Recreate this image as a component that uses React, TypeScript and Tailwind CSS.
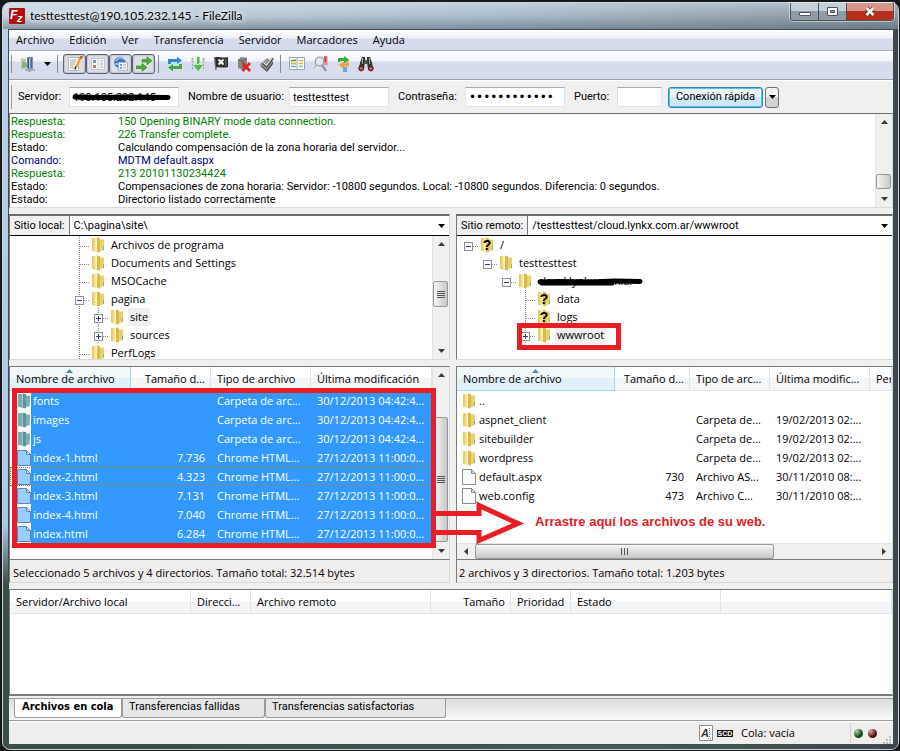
import { ReactNode } from 'react'

type IconKind = 'folder' | 'unknown' | 'file'
type Guide = 'none' | 'line' | 'tee' | 'plus' | 'minus' | 'root'

interface LogLine {
  kind: 'Respuesta:' | 'Estado:' | 'Comando:'
  text: string
}

interface TreeNode {
  label: string
  guides: Guide[]
  icon: IconKind
  selected?: boolean
  hidden?: boolean
}

interface FileRow {
  name: string
  icon: IconKind
  size: string
  type: string
  modified: string
  focused?: boolean
}

const menus = ['Archivo', 'Edición', 'Ver', 'Transferencia', 'Servidor', 'Marcadores', 'Ayuda']

const logLines: LogLine[] = [
  { kind: 'Respuesta:', text: '150 Opening BINARY mode data connection.' },
  { kind: 'Respuesta:', text: '226 Transfer complete.' },
  { kind: 'Estado:', text: 'Calculando compensación de la zona horaria del servidor...' },
  { kind: 'Comando:', text: 'MDTM default.aspx' },
  { kind: 'Respuesta:', text: '213 20101130234424' },
  { kind: 'Estado:', text: 'Compensaciones de zona horaria: Servidor: -10800 segundos. Local: -10800 segundos. Diferencia: 0 segundos.' },
  { kind: 'Estado:', text: 'Directorio listado correctamente' },
]

const logColors = {
  'Respuesta:': 'text-[#008000]',
  'Estado:': 'text-black',
  'Comando:': 'text-[#000080]',
}

const localTree: TreeNode[] = [
  { label: 'Archivos de programa', guides: ['tee'], icon: 'folder' },
  { label: 'Documents and Settings', guides: ['tee'], icon: 'folder' },
  { label: 'MSOCache', guides: ['tee'], icon: 'folder' },
  { label: 'pagina', guides: ['minus'], icon: 'folder' },
  { label: 'site', guides: ['line', 'plus'], icon: 'folder', selected: true },
  { label: 'sources', guides: ['line', 'plus'], icon: 'folder' },
  { label: 'PerfLogs', guides: ['tee'], icon: 'folder' },
]

const remoteTree: TreeNode[] = [
  { label: '/', guides: ['root'], icon: 'unknown' },
  { label: 'testtesttest', guides: ['none', 'root'], icon: 'folder' },
  { label: 'cloud.lynkx.com.ar', guides: ['none', 'none', 'root'], icon: 'folder', hidden: true },
  { label: 'data', guides: ['none', 'none', 'none', 'tee'], icon: 'unknown' },
  { label: 'logs', guides: ['none', 'none', 'none', 'tee'], icon: 'unknown' },
  { label: 'wwwroot', guides: ['none', 'none', 'none', 'plus'], icon: 'folder', selected: true },
]

const localFiles: FileRow[] = [
  { name: 'fonts', icon: 'folder', size: '', type: 'Carpeta de arc...', modified: '30/12/2013 04:42:4...' },
  { name: 'images', icon: 'folder', size: '', type: 'Carpeta de arc...', modified: '30/12/2013 04:42:4...' },
  { name: 'js', icon: 'folder', size: '', type: 'Carpeta de arc...', modified: '30/12/2013 04:42:4...' },
  { name: 'index-1.html', icon: 'file', size: '7.736', type: 'Chrome HTML...', modified: '27/12/2013 11:00:0...' },
  { name: 'index-2.html', icon: 'file', size: '4.323', type: 'Chrome HTML...', modified: '27/12/2013 11:00:0...', focused: true },
  { name: 'index-3.html', icon: 'file', size: '7.131', type: 'Chrome HTML...', modified: '27/12/2013 11:00:0...' },
  { name: 'index-4.html', icon: 'file', size: '7.040', type: 'Chrome HTML...', modified: '27/12/2013 11:00:0...' },
  { name: 'index.html', icon: 'file', size: '6.284', type: 'Chrome HTML...', modified: '27/12/2013 11:00:0...' },
]

const remoteFiles: FileRow[] = [
  { name: '..', icon: 'folder', size: '', type: '', modified: '' },
  { name: 'aspnet_client', icon: 'folder', size: '', type: 'Carpeta de...', modified: '19/02/2013 02:...' },
  { name: 'sitebuilder', icon: 'folder', size: '', type: 'Carpeta de...', modified: '19/02/2013 02:...' },
  { name: 'wordpress', icon: 'folder', size: '', type: 'Carpeta de...', modified: '19/02/2013 02:...' },
  { name: 'default.aspx', icon: 'file', size: '730', type: 'Archivo AS...', modified: '30/11/2010 08:...' },
  { name: 'web.config', icon: 'file', size: '473', type: 'Archivo C...', modified: '30/11/2010 08:...' },
]

function ItemIcon({ kind, selected = false }: { kind: IconKind; selected?: boolean }) {
  if (kind === 'file') {
    return (
      <svg className="h-4 w-3.5 shrink-0" viewBox="0 0 14 16" aria-hidden="true">
        <path d="M.5.5h9l4 4v11H.5z" fill={selected ? '#99ccff' : '#fbfbfb'} stroke={selected ? '#5c86b4' : '#8b8b8b'} />
        <path d="M9.5.5v4h4z" fill={selected ? '#c4e0fb' : '#e4e4e4'} stroke={selected ? '#5c86b4' : '#8b8b8b'} />
      </svg>
    )
  }
  return (
    <svg className="h-4 w-3.5 shrink-0" viewBox="0 0 14 16" aria-hidden="true">
      <path d="M1 1h5.500v14L1 13.800z" fill={selected ? '#6fa5aa' : '#f0de88'} />
      <path d="M1 1h2v13.200l-2-.4z" fill={selected ? '#7fb0b3' : '#e6cf6a'} />
      <path d="M8 2.500h5v10.500l-5 1.500z" fill={selected ? '#7eaeb2' : '#ead06a'} />
      <path d="M6 .5l3 .8V15.500l-3-.5z" fill={selected ? '#5c959f' : '#d9bb4c'} />
      <path d="M4.500 1l1.500-.5V15l-1.500-.4z" fill={selected ? '#9cc6c6' : '#fbf3bd'} />
      <path d="M12.500 9v4" stroke={selected ? '#9cd0ea' : '#7fb4a8'} />
      {kind === 'unknown' && (
        <text x="7" y="13" textAnchor="middle" fontFamily="Liberation Sans" fontWeight="bold" fontSize="14" fill="#000">
          ?
        </text>
      )}
    </svg>
  )
}

// One 19px wide slot in front of a tree entry
function GuideCell({ kind }: { kind: Guide }) {
  const box = kind === 'plus' || kind === 'minus' || kind === 'root'
  return (
    <svg className="h-[18px] w-[19px] shrink-0" viewBox="0 0 19 18" fill="none" shapeRendering="crispEdges" aria-hidden="true">
      {kind !== 'none' && kind !== 'root' && <path d="M9.500 0v18" stroke="#8a8a8a" strokeDasharray="1 1" />}
      {kind !== 'none' && kind !== 'line' && <path d="M10 10.500h9" stroke="#8a8a8a" strokeDasharray="1 1" />}
      {box && (
        <>
          <rect x="5.500" y="6.500" width="8" height="8" fill="#fff" stroke="#919191" />
          <path d="M7 10.500h5" stroke="#2c3c8c" />
          {kind === 'plus' && <path d="M9.500 8v5" stroke="#2c3c8c" />}
        </>
      )}
    </svg>
  )
}

function Tree({ nodes, label }: { nodes: TreeNode[]; label: string }) {
  return (
    <ul aria-label={label}>
      {nodes.map((node) => (
        <li key={node.label} className="flex h-[18px] items-center">
          {node.guides.map((g, i) => (
            <GuideCell key={i} kind={g} />
          ))}
          <span className="ml-0.5 flex">
            <ItemIcon kind={node.icon} />
          </span>
          <span className={`relative ml-1 px-0.5 leading-[18px] ${node.selected ? 'bg-[#efefef]' : ''}`}>
            {node.label}
            {node.hidden && (
              <svg className="absolute left-0 top-1.5 h-2 w-[108px]" viewBox="0 0 108 8" aria-hidden="true">
                <path d="M4 4l20-.5 30 .5 25-1 25 .5M6 5h70" stroke="#000" strokeWidth="5" strokeLinecap="round" fill="none" />
              </svg>
            )}
          </span>
        </li>
      ))}
    </ul>
  )
}

function Triangle({ dir }: { dir: 'up' | 'down' | 'left' | 'right' }) {
  const d = {
    up: 'M0 5l3.500-4 3.500 4z',
    down: 'M0 2l3.500 4 3.500-4z',
    left: 'M5 0v7l-4-3.500z',
    right: 'M2 0v7l4-3.500z',
  }[dir]
  return (
    <svg className="h-[7px] w-[7px]" viewBox="0 0 7 7" aria-hidden="true">
      <path d={d} fill="#3c3c3c" />
    </svg>
  )
}

function ScrollBar({ track, thumb, grip = true }: { track: string; thumb: string; grip?: boolean }) {
  return (
    <div className="flex w-[17px] shrink-0 flex-col border-l border-[#e3e3e3] bg-[#f0f0f0]">
      <button type="button" aria-label="Subir" className="flex h-[17px] items-center justify-center">
        <Triangle dir="up" />
      </button>
      <div className={`flex-1 ${track}`}>
        <div className={`mr-px flex flex-col items-center justify-center gap-px rounded-xs border border-[#979797] bg-linear-to-r from-[#f5f5f5] to-[#c8c8c8] ${thumb}`}>
          {grip && [0, 1, 2, 3].map((i) => <span key={i} className="h-px w-2 border-b border-[#555]" />)}
        </div>
      </div>
      <button type="button" aria-label="Bajar" className="flex h-[17px] items-center justify-center">
        <Triangle dir="down" />
      </button>
    </div>
  )
}

function SiteCombo({ id, label, value }: { id: string; label: string; value: string }) {
  return (
    <div className="flex h-5 border-b border-black bg-white font-[Roboto,'Liberation_Sans',sans-serif] text-[11px]">
      <label htmlFor={id} className="flex shrink-0 items-center border-r border-[#777] bg-[#f0f0f0] pl-1 pr-1 pt-px">
        {label}
      </label>
      <div className="relative flex flex-1 items-center">
        <select id={id} className="h-full w-full appearance-none bg-white pl-1 pt-px outline-none">
          <option>{value}</option>
        </select>
        <svg className="pointer-events-none absolute right-1 h-1 w-[7px]" viewBox="0 0 7 4" aria-hidden="true">
          <path d="M0 0h7l-3.500 4z" />
        </svg>
      </div>
    </div>
  )
}

function HeadCell({ children, sorted = false, right = false }: { children?: ReactNode; sorted?: boolean; right?: boolean }) {
  return (
    <th
      scope="col"
      className={`relative h-6 overflow-hidden whitespace-nowrap border-b border-r pb-0 pl-1.5 pr-[5px] pt-0.5 font-normal ${right ? 'text-right' : 'text-left'} ${
        sorted
          ? 'border-[#96d9f9] bg-linear-to-b from-[#f2f9fc] from-50% to-[#e1f1f9] to-50%'
          : 'border-[#e2e3e6] bg-linear-to-b from-white from-50% to-[#f4f5f7] to-50%'
      }`}
    >
      {children}
      {sorted && (
        <svg className="absolute left-1/2 top-0.5 -ml-1 h-1 w-[7px]" viewBox="0 0 7 4" aria-hidden="true">
          <path d="M0 4l3.500-4 3.500 4z" fill="#5a8ba5" />
        </svg>
      )}
    </th>
  )
}

function FileCells({ file, selected }: { file: FileRow; selected: boolean }) {
  const fill = selected ? 'bg-[#3399ff] text-white' : ''
  const cell = `h-[19px] overflow-hidden whitespace-nowrap px-1.5 pb-0 pt-px leading-[18px] ${fill}`
  return (
    <tr className={file.focused ? 'outline-1 -outline-offset-1 outline-dotted outline-[#a8804e]' : ''}>
      <td className={`h-[19px] p-0 ${selected ? 'pl-[7px]' : 'pl-[5px]'}`}>
        <div className="flex h-[19px] items-center">
          <ItemIcon kind={file.icon} selected={selected} />
          <span className={`flex-1 whitespace-nowrap leading-[19px] ${selected ? 'h-[19px] pl-0.5' : 'pl-[3px]'} ${fill}`}>
            {file.name}
          </span>
        </div>
      </td>
      <td className={`${cell} text-right`}>{file.size}</td>
      <td className={cell}>{file.type}</td>
      <td className={cell}>{file.modified}</td>
    </tr>
  )
}

function ToolIcon({ children }: { children: ReactNode }) {
  return (
    <svg className="h-4 w-4" viewBox="0 0 16 16" fill="none" aria-hidden="true">
      {children}
    </svg>
  )
}

function ToolButton({ label, pressed = false, children }: { label: string; pressed?: boolean; children: ReactNode }) {
  return (
    <button
      type="button"
      aria-label={label}
      aria-pressed={pressed}
      className={`flex h-5 w-[23px] items-center justify-center rounded-[3px] border ${
        pressed ? 'border-[#5d6470] bg-[#dcdfe8] shadow-[inset_0_0_2px_#8c929e]' : 'border-transparent'
      }`}
    >
      <ToolIcon>{children}</ToolIcon>
    </button>
  )
}

function Separator() {
  return <span className="h-[18px] w-px bg-[#868b99]" />
}

function Toolbar() {
  return (
    <div
      role="toolbar"
      aria-label="Herramientas"
      className="flex h-[29px] shrink-0 items-center border-b border-[#9b9ea8] bg-linear-to-b from-white from-0% via-[#f2f4fa] via-35% to-[#d6dcee] to-40% pb-0.5 pl-0.5"
    >
      <Separator />
      <div className="ml-1 flex">
        <ToolButton label="Gestor de sitios">
          <path d="M1 2l5 1v9l-5 2z" fill="#b8cfae" />
          <path d="M2 5l5 2v4l-5 1z" fill="#8cb07e" />
          <path d="M7 1h6v12H7z" fill="#7f93b4" />
          <path d="M8.500 2v10M11 2v10" stroke="#38598f" strokeWidth="1.500" />
          <path d="M9.800 2v10" stroke="#d4def0" />
          <path d="M5 14h10M8 15h3" stroke="#7a8699" />
        </ToolButton>
        <button type="button" aria-label="Abrir lista de sitios" className="flex w-4 items-center justify-center">
          <svg className="h-1 w-[7px]" viewBox="0 0 7 4" aria-hidden="true">
            <path d="M0 0h7l-3.500 4z" />
          </svg>
        </button>
      </div>
      <span className="w-0.5" />
      <Separator />
      <div className="ml-[5px] mr-[3px] flex">
        <ToolButton label="Mostrar registro" pressed>
          <path d="M1.500 1.500h10v13h-10z" fill="#fff" stroke="#b4b4b4" />
          <path d="M3 4h7M3 6h6M3 8h5M3 10h4M3 12h6" stroke="#a4a4a4" />
          <path d="M14 1L9 11" stroke="#eeaa22" strokeWidth="2.500" />
          <path d="M14.800 0L13.500 2.500" stroke="#c4523e" strokeWidth="2.500" />
          <path d="M9 10.500l-1 3" stroke="#333" strokeWidth="1.500" />
        </ToolButton>
        <ToolButton label="Mostrar árbol local" pressed>
          <path d="M1.500 2.500h13v11h-13z" fill="#fafafa" stroke="#c6c6c6" />
          <path d="M3 4h3v3H3z" fill="#7298cf" />
          <path d="M3 9h3v3H3z" fill="#cf7474" />
          <path d="M8 3v10" stroke="#c6c6c6" />
          <path d="M10 5h3M10 8h3M10 11h3" stroke="#9ba7b8" />
        </ToolButton>
        <ToolButton label="Mostrar árbol remoto" pressed>
          <circle cx="7" cy="6.500" r="5.800" fill="#3c76c2" />
          <path d="M3 5c2-4 6-4 9-1M2 8h4" stroke="#a9cdf2" strokeWidth="1.500" />
          <path d="M5.500 6.500h9v8h-9z" fill="#f4f6fa" stroke="#aeb6c4" />
          <path d="M7 8h2v2H7zM7 11h2v2H7z" fill="#7a9ccd" />
          <path d="M10 9h3M10 12h3" stroke="#a7aebb" />
        </ToolButton>
        <ToolButton label="Mostrar cola" pressed>
          <path d="M6 3.500h5V.800L16 4.800 11 8.800V6H6z" fill="#48b236" stroke="#267c1d" strokeWidth=".6" />
          <path d="M0 10h6V7.500L11 11.500 6 15.200V12.500H0z" fill="#48b236" stroke="#267c1d" strokeWidth=".6" />
        </ToolButton>
      </div>
      <Separator />
      <div className="ml-1 mr-0.5 flex">
        <ToolButton label="Actualizar">
          <path d="M1 8V3h9V.500L15 4.500 10 8V6H4v2z" fill="#2a8fd6" />
          <path d="M15 8v5H6v2.500L1 11.500 6 8v2h6V8z" fill="#3eab3c" />
        </ToolButton>
        <ToolButton label="Procesar cola">
          <path d="M1 2h3v8H1zM12 2h3v8h-3z" fill="#d5dbe2" />
          <path d="M2.500 2v12M13.500 2v12" stroke="#8fb58f" strokeDasharray="2 1" />
          <path d="M7 1h2.500v8H13l-4.800 6L3.500 9H7z" fill="#52b942" />
          <path d="M4 5l4 4 4-4" stroke="#d9f0d2" />
        </ToolButton>
        <ToolButton label="Cancelar operación">
          <path d="M1.500 1l1.500 13" stroke="#777" strokeWidth="1.500" />
          <path d="M2 1.500c4-1.500 7 1 13-.5v10c-4 1.500-8-.5-12 .5z" fill="#2d2d2d" />
          <path d="M5.500 3.500l5 5M10.500 3.500l-5 5" stroke="#fff" strokeWidth="2" />
          <path d="M13 3v7" stroke="#777" />
        </ToolButton>
        <ToolButton label="Desconectar">
          <path d="M2 4l3-3 6 1v8l-4 4-5-2z" fill="#858585" />
          <path d="M2 4l5 1v8M7 5l4-3" stroke="#5f5f5f" />
          <path d="M6.500 7l7.500 8M14 7l-7.500 8" stroke="#e02424" strokeWidth="2.600" />
        </ToolButton>
        <ToolButton label="Reconectar">
          <path d="M1 8l7-6 6 3.500L8 13z" fill="#9a9a9a" />
          <path d="M1 8l7 5v3l-6-5z" fill="#6c6c6c" />
          <path d="M8 13l6-7.500V8l-6 8z" fill="#505050" />
          <path d="M4 7l3.500 3L14 2" stroke="#3a3a3a" strokeWidth="2.400" />
          <path d="M4.200 6.300l3.300 3L13.500 1.500" stroke="#ececec" strokeWidth="1.200" />
        </ToolButton>
      </div>
      <Separator />
      <div className="ml-1 flex">
        <ToolButton label="Filtros">
          <path d="M.5 1.500h15v12H.5z" fill="#fff" stroke="#93a7bd" />
          <path d="M2 4.500h5" stroke="#4a8b4a" strokeWidth="1.500" />
          <path d="M2 7.500h5" stroke="#d8b932" strokeWidth="2" />
          <path d="M2 10.500h5" stroke="#6ba4d8" strokeWidth="1.500" />
          <path d="M8 2v11" stroke="#93a7bd" />
          <path d="M9.500 4.500h4.500M9.500 7.500h4.500" stroke="#d8b932" strokeWidth="1.500" />
          <path d="M9.500 10.500h4.500" stroke="#8fc08f" strokeWidth="1.500" />
        </ToolButton>
        <ToolButton label="Comparar directorios">
          <path d="M1 11h6v4H1z" fill="#dfe3e8" />
          <path d="M12 0h3.500v9H12z" fill="#e58080" />
          <path d="M13.500 1v5" stroke="#c43a3a" strokeWidth="1.500" />
          <circle cx="7.500" cy="5.500" r="4.300" fill="#dde6f1" stroke="#9a9fa8" strokeWidth="1.300" />
          <path d="M10 9l4 6" stroke="#868b94" strokeWidth="2" />
          <path d="M4.500 8.500L2 13" stroke="#a3a8b0" />
        </ToolButton>
        <ToolButton label="Navegación sincronizada">
          <path d="M0 10h6v5H0z" fill="#dfe3e8" />
          <path d="M3 6V2h6V0L14.500 4 9 7.500V5H5.500v1z" fill="#43ad39" />
          <path d="M14 5v5.500H9V13L3.500 9 9 5.500V8" fill="#e9a43a" />
          <path d="M8 11h4v5H8z" fill="#6fa4dc" />
        </ToolButton>
        <ToolButton label="Buscar archivos">
          <path d="M4 1h3v5l-1 7H.500L2 7zM9 1h3l2 6 1.500 6H10L9 6z" fill="#333" />
          <path d="M6.500 4h3v4h-3z" fill="#555" />
          <path d="M4.500 2v6M11.500 2v6" stroke="#aaa" />
          <circle cx="3.200" cy="12.500" r="2.400" fill="#e0492c" stroke="#222" />
          <circle cx="12.800" cy="12.500" r="2.400" fill="#e0492c" stroke="#222" />
        </ToolButton>
      </div>
    </div>
  )
}

const field = 'h-5 border border-[#e2e3ea] border-t-[#abadb3] bg-white px-[3px] outline-none'

function QuickConnect() {
  return (
    <form
      className="flex h-[33px] shrink-0 items-center border-t border-white bg-[#f0f0f0] pl-0.5 font-[Roboto,'Liberation_Sans',sans-serif] text-[11px]"
      onSubmit={(e) => e.preventDefault()}
    >
      <span className="h-6 w-px bg-[#9a9a9a]" />
      <label htmlFor="host" className="ml-1.5 w-[51px] pt-px">Servidor:</label>
      <div className="relative flex">
        <input id="host" className={`${field} w-[110px]`} defaultValue="190.105.232.145" />
        <svg className="pointer-events-none absolute left-0.5 top-1.5 h-2 w-[102px]" viewBox="0 0 102 8" aria-hidden="true">
          <path d="M4 4l25 .5 30-.5 38 .5M8 4.500h70" stroke="#000" strokeWidth="5" strokeLinecap="round" fill="none" />
        </svg>
      </div>
      <label htmlFor="user" className="ml-[9px] w-[101px] pt-px">Nombre de usuario:</label>
      <input id="user" className={`${field} w-[100px]`} defaultValue="testtesttest" />
      <label htmlFor="pass" className="ml-[9px] w-[67px] pt-px">Contraseña:</label>
      <input id="pass" type="password" className={`${field} w-[100px] font-['DejaVu_Sans',sans-serif] text-xs`} defaultValue="abcdefghijkl" />
      <label htmlFor="port" className="ml-[9px] w-[43px] pt-px">Puerto:</label>
      <input id="port" className={`${field} w-[45px]`} />
      <button
        type="submit"
        className="ml-1.5 h-[21px] w-[95px] rounded-[3px] border border-[#3c7fb1] bg-linear-to-b from-[#f0f7fb] from-50% to-[#cfe6f4] to-50% pt-px shadow-[inset_0_0_0_1px_#48c8f0]"
      >
        Conexión rápida
      </button>
      <button
        type="button"
        aria-label="Historial"
        className="ml-0.5 flex h-[21px] w-3.5 items-center justify-center rounded-[3px] border border-[#707070] bg-linear-to-b from-[#f2f2f2] from-50% to-[#d4d4d4] to-50%"
      >
        <svg className="h-1 w-[7px]" viewBox="0 0 7 4" aria-hidden="true">
          <path d="M0 0h7l-3.500 4z" />
        </svg>
      </button>
    </form>
  )
}

function TitleBar() {
  return (
    <header className="-ml-[5px] -mr-1 h-[26px] shrink-0 rounded-t-[7px] bg-linear-to-r from-[#c6d4df] from-0% via-[#a9bccd] via-55% to-[#8a959e]">
      <div className="flex h-full items-start rounded-t-[7px] bg-linear-to-b from-[#e4edf4]/40 from-0% via-transparent via-50% to-[#4d6272]/50 pl-1.5 pr-1">
        <svg className="mt-[5px] h-4 w-4" viewBox="0 0 16 16" aria-hidden="true">
          <rect width="16" height="16" rx="1" fill="#b30f0f" />
          <text x="1" y="11" fontFamily="Liberation Sans" fontWeight="bold" fontStyle="italic" fontSize="12" fill="#fff">F</text>
          <text x="8" y="14" fontFamily="Liberation Sans" fontWeight="bold" fontStyle="italic" fontSize="11" fill="#fff">z</text>
        </svg>
        <h1 className="ml-[5px] mt-[3px] flex-1 font-[Lato,sans-serif] text-xs leading-5 [text-shadow:0_0_6px_#fff,0_0_6px_#fff]">
          testtesttest@190.105.232.145 - FileZilla
        </h1>
        <div className="flex h-[18px] overflow-hidden rounded-b-[4px] border border-t-0 border-[#48525c] shadow-[0_0_0_1px_#ffffff80]">
          <button type="button" aria-label="Minimizar" className="flex w-7 items-center justify-center border-r border-[#48525c] bg-linear-to-b from-[#c5cfd8] from-45% to-[#8f9ca8] to-50% pt-1">
            <span className="h-1 w-3 rounded-[1px] border border-[#4b535c] bg-white" />
          </button>
          <button type="button" aria-label="Maximizar" className="flex w-7 items-center justify-center border-r border-[#48525c] bg-linear-to-b from-[#c5cfd8] from-45% to-[#8f9ca8] to-50%">
            <svg className="h-[9px] w-[11px]" viewBox="0 0 11 9" aria-hidden="true">
              <path d="M.5.500h10v8H.5zM3.500 3.500v2h4v-2z" fill="#fff" fillRule="evenodd" stroke="#4b535c" />
            </svg>
          </button>
          <button type="button" aria-label="Cerrar" className="flex w-[46px] items-center justify-center bg-linear-to-b from-[#d8968a] from-45% to-[#b5301b] to-50%">
            <svg className="h-[11px] w-3" viewBox="0 0 12 11" aria-hidden="true">
              <path d="M2.500 2l7 7M9.500 2l-7 7" stroke="#5a3a3a" strokeWidth="4" />
              <path d="M2.500 2l7 7M9.500 2l-7 7" stroke="#fff" strokeWidth="2.500" />
            </svg>
          </button>
        </div>
      </div>
    </header>
  )
}

function LocalPane() {
  return (
    <section className="flex min-w-0 flex-col gap-1.5">
      <div className="flex h-[146px] flex-col border border-t-2 border-[#d9d9d9] border-l-[#777] border-t-[#6b6b6b] bg-white">
        <SiteCombo id="local-site" label="Sitio local:" value="C:\pagina\site\" />
        <div className="flex min-h-0 flex-1">
          <div className="flex-1 overflow-hidden pl-[60px]">
            <Tree nodes={localTree} label="Árbol local" />
          </div>
          <ScrollBar track="pt-7" thumb="h-[26px]" />
        </div>
      </div>
      <div className="relative">
        <div className="flex h-[194px] border border-[#7a7a7a] border-r-[#d9d9d9] bg-white">
          <div className="min-w-0 flex-1 overflow-hidden">
            <table className="w-full table-fixed border-separate border-spacing-0">
              <colgroup>
                <col className="w-[121px]" />
                <col className="w-20" />
                <col className="w-[100px]" />
                <col />
              </colgroup>
              <thead>
                <tr>
                  <HeadCell sorted>Nombre de archivo</HeadCell>
                  <HeadCell right>Tamaño d...</HeadCell>
                  <HeadCell>Tipo de archivo</HeadCell>
                  <HeadCell>Última modificación</HeadCell>
                </tr>
              </thead>
              <tbody>
                {localFiles.map((file) => (
                  <FileCells key={file.name} file={file} selected />
                ))}
              </tbody>
            </table>
          </div>
          <ScrollBar track="pt-[33px]" thumb="h-[125px]" />
        </div>
        <p className="flex h-[23px] items-center border border-t-0 border-[#d9d9d9] border-l-[#7a7a7a] bg-[#f0eded] pl-[3px] pt-1">
          Seleccionado 5 archivos y 4 directorios. Tamaño total: 32.514 bytes
        </p>
        <div className="pointer-events-none absolute left-[3px] right-3.5 top-[22px] h-[160px] border-[5px] border-[#ea1c24]" />
        <svg className="pointer-events-none absolute -right-[75px] top-[134px] z-10 h-[46px] w-[90px]" viewBox="0 0 90 46" fill="none" aria-hidden="true">
          <path d="M0 13.500h44v-8l39 18-39 17v-8H0" stroke="#ea1c24" strokeWidth="5" />
        </svg>
      </div>
    </section>
  )
}

function RemotePane() {
  return (
    <section className="flex min-w-0 flex-col gap-1.5">
      <div className="flex h-[146px] flex-col border border-t-2 border-[#d9d9d9] border-l-[#777] border-t-[#6b6b6b] bg-white">
        <SiteCombo id="remote-site" label="Sitio remoto:" value="/testtesttest/cloud.lynkx.com.ar/wwwroot" />
        <div className="relative flex-1 pl-0.5">
          <Tree nodes={remoteTree} label="Árbol remoto" />
          <div className="pointer-events-none absolute left-[60px] top-[87px] h-[27px] w-[104px] border-[5px] border-[#ea1c24]" />
        </div>
      </div>
      <div>
        <div className="relative flex h-[194px] flex-col border border-[#7a7a7a] border-r-[#d9d9d9] bg-white">
          <div className="min-h-0 flex-1 overflow-hidden">
            <table className="w-full table-fixed border-separate border-spacing-0">
              <colgroup>
                <col className="w-[158px]" />
                <col className="w-[75px]" />
                <col className="w-20" />
                <col className="w-[100px]" />
                <col />
              </colgroup>
              <thead>
                <tr>
                  <HeadCell sorted>Nombre de archivo</HeadCell>
                  <HeadCell right>Tamaño d...</HeadCell>
                  <HeadCell>Tipo de arc...</HeadCell>
                  <HeadCell>Última modific...</HeadCell>
                  <HeadCell>Per</HeadCell>
                </tr>
              </thead>
              <tbody>
                {remoteFiles.map((file) => (
                  <FileCells key={file.name} file={file} selected={false} />
                ))}
              </tbody>
            </table>
          </div>
          <div className="flex h-4 shrink-0 border-t border-[#e3e3e3] bg-[#f0f0f0]">
            <button type="button" aria-label="Izquierda" className="flex w-[18px] items-center justify-center">
              <Triangle dir="left" />
            </button>
            <div className="flex-1">
              <div className="flex h-[15px] w-3/4 items-center justify-center gap-px rounded-xs border border-[#979797] bg-linear-to-b from-[#f5f5f5] to-[#c8c8c8]">
                {[0, 1, 2].map((i) => (
                  <span key={i} className="h-[7px] w-0.5 border-l border-[#555]" />
                ))}
              </div>
            </div>
            <button type="button" aria-label="Derecha" className="flex w-[18px] items-center justify-center">
              <Triangle dir="right" />
            </button>
          </div>
          <p className="pointer-events-none absolute left-[78px] top-[147px] whitespace-nowrap font-['Liberation_Sans',sans-serif] text-[13px] font-bold leading-4 text-[#dd2027]">
            Arrastre aquí los archivos de su web.
          </p>
        </div>
        <p className="flex h-[23px] items-center border border-t-0 border-[#d9d9d9] border-l-[#7a7a7a] bg-[#f0eded] pl-0.5 pt-1">
          2 archivos y 3 directorios. Tamaño total: 1.203 bytes
        </p>
      </div>
    </section>
  )
}

function Queue() {
  return (
    <section className="mt-1.5 flex min-h-[107px] flex-1 flex-col border border-[#7a7a7a] border-b-2 border-r-[#d9d9d9] bg-white">
      <table className="w-full table-fixed border-separate border-spacing-0">
        <colgroup>
          <col className="w-[181px]" />
          <col className="w-[60px]" />
          <col className="w-[180px]" />
          <col className="w-20" />
          <col className="w-[60px]" />
          <col className="w-[150px]" />
          <col />
        </colgroup>
        <thead>
          <tr>
            <HeadCell>Servidor/Archivo local</HeadCell>
            <HeadCell>Direcci...</HeadCell>
            <HeadCell>Archivo remoto</HeadCell>
            <HeadCell right>Tamaño</HeadCell>
            <HeadCell>Prioridad</HeadCell>
            <HeadCell>Estado</HeadCell>
            <HeadCell />
          </tr>
        </thead>
      </table>
    </section>
  )
}

function QueueTabs() {
  const tab = 'h-[19px] rounded-b-[3px] border border-t-0 border-[#9a9a9a] pb-0.5 text-left'
  return (
    <div
      role="tablist"
      className="mt-0.5 flex h-[23px] shrink-0 items-start border-b border-t border-[#9a9a9a] bg-linear-to-b from-[#dcdcdc] to-[#fafafa] pl-[5px] font-[Roboto,'Liberation_Sans',sans-serif] text-[11px]"
    >
      <button type="button" role="tab" aria-selected="true" className={`${tab} w-[108px] bg-white pl-[7px] font-['DejaVu_Sans_Condensed',sans-serif] font-bold`}>
        Archivos en cola
      </button>
      <button type="button" role="tab" aria-selected="false" className={`${tab} w-[143px] bg-[#e6e6e6] pl-1.5`}>
        Transferencias fallidas
      </button>
      <button type="button" role="tab" aria-selected="false" className={`${tab} w-[181px] bg-[#e6e6e6] pl-1.5`}>
        Transferencias satisfactorias
      </button>
    </div>
  )
}

function StatusBar() {
  return (
    <footer className="flex h-[23px] shrink-0 items-center justify-end border-t border-white bg-[#f0eded]">
      <svg className="h-4 w-3.5" viewBox="0 0 14 16" aria-hidden="true">
        <path d="M.5.500h13v15H.5z" fill="#fff" stroke="#8c8c8c" />
        <text x="2" y="12" fontFamily="Liberation Sans" fontWeight="bold" fontStyle="italic" fontSize="11" fill="#333">A</text>
        <path d="M10.500 3v9M9 13.500h3" stroke="#777" strokeDasharray="1 1" />
      </svg>
      <svg className="ml-1 h-[7px] w-4" viewBox="0 0 16 7" aria-hidden="true">
        <rect width="16" height="7" fill="#111" />
        <text x="8" y="6" textAnchor="middle" fontFamily="Liberation Sans" fontWeight="bold" fontSize="7" fill="#fff">SCD</text>
      </svg>
      <span className="ml-2 w-[109px]">Cola: vacía</span>
      <span className="h-5 w-px bg-[#d2d0d0]" />
      <span className="ml-[3px] h-[9px] w-[9px] rounded-full bg-radial-[at_30%_25%] from-[#b5cfb5] to-[#0f4a14] to-60%" />
      <span className="ml-[5px] h-[9px] w-[9px] rounded-full bg-radial-[at_30%_25%] from-[#d3adad] to-[#5d0a0a] to-60%" />
      <svg className="ml-1.5 mr-0.5 h-2 w-2 self-end" viewBox="0 0 8 8" aria-hidden="true">
        <path d="M6 0h2v2H6zM3 3h2v2H3zM6 3h2v2H6zM0 6h2v2H0zM3 6h2v2H3zM6 6h2v2H6z" fill="#bdbab8" />
      </svg>
    </footer>
  )
}

export default function App() {
  return (
    <div className="flex min-h-screen flex-col bg-[#15191b] pb-0.5 pl-0.5 pr-px pt-0.5 font-['Open_Sans','Noto_Sans',sans-serif] text-[11px] text-black">
      <div className="flex flex-1 flex-col rounded-lg border border-[#c9d6e0] bg-linear-to-b from-[#b9cfe4] from-0% via-[#aac8e8] via-70% to-[#3d5044] to-78%">
        <div className="flex flex-1 flex-col rounded-[7px] bg-linear-to-r from-transparent from-20% via-[#7b8b98]/20 via-70% to-[#3c474c] pb-1 pl-[5px] pr-1">
          <TitleBar />
          <main className="flex flex-1 flex-col border border-[#414a52] bg-[#f0f0f0]">
            <nav className="flex h-[21px] shrink-0 items-center gap-[15px] border-b border-[#a9adb8] bg-linear-to-b from-white from-0% via-[#eef1f8] via-40% to-[#d6dcee] to-45% pl-[7px] pt-px">
              {menus.map((item) => (
                <button key={item} type="button">
                  {item}
                </button>
              ))}
            </nav>
            <Toolbar />
            <QuickConnect />
            <section className="flex h-[95px] shrink-0 border border-[#d9d9d9] border-l-[#777] border-t-[#6b6b6b] bg-white font-[Roboto,'Liberation_Sans',sans-serif] text-[11px]">
              <div className="min-w-0 flex-1 overflow-hidden pl-px pt-px leading-[13px]">
                {logLines.map((line, i) => (
                  <div key={i} className={`flex whitespace-nowrap ${logColors[line.kind]}`}>
                    <span className="w-[107px] shrink-0">{line.kind}</span>
                    <span>{line.text}</span>
                  </div>
                ))}
              </div>
              <ScrollBar track="pt-[43px]" thumb="h-[15px]" grip={false} />
            </section>
            <div className="mt-1.5 grid shrink-0 grid-cols-[441fr_437fr] gap-1.5">
              <LocalPane />
              <RemotePane />
            </div>
            <Queue />
            <QueueTabs />
            <StatusBar />
          </main>
        </div>
      </div>
    </div>
  )
}
